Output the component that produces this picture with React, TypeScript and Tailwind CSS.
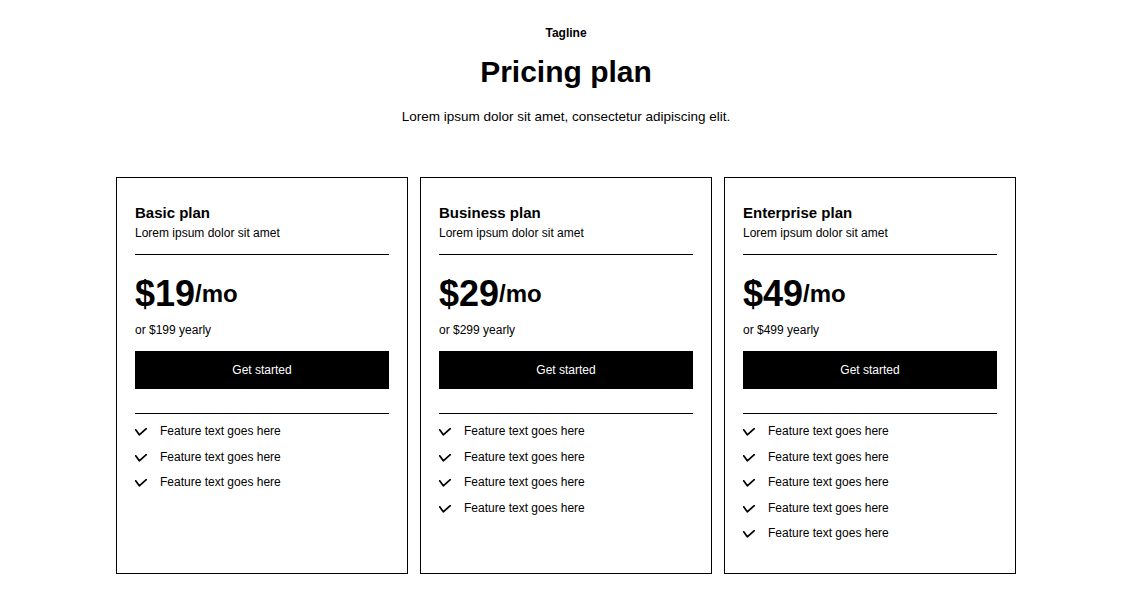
const plans = [
  { name: "Basic plan", price: "$19", yearly: "or $199 yearly", features: 3 },
  { name: "Business plan", price: "$29", yearly: "or $299 yearly", features: 4 },
  { name: "Enterprise plan", price: "$49", yearly: "or $499 yearly", features: 5 },
];

function CheckIcon() {
  return (
    <svg width="12" height="8" viewBox="0 0 12 8" fill="none" className="mt-[5px] shrink-0">
      <polyline
        points="0.7,1.8 4.3,6.8 11.3,0.6"
        stroke="#000"
        strokeWidth="1.7"
        strokeLinecap="round"
        strokeLinejoin="round"
      />
    </svg>
  );
}

function PlanCard({ name, price, yearly, features }: (typeof plans)[number]) {
  return (
    <div className="flex flex-col border border-black bg-white px-[18px] pt-[25px] pb-[32px]">
      <h3 className="text-[15px] font-bold leading-[20px]">{name}</h3>
      <p className="mt-[2px] text-[12px] leading-[16px]">Lorem ipsum dolor sit amet</p>
      <div className="mt-[13px] h-px bg-black" />
      <div className="mt-[19.5px] flex items-center font-bold leading-[40px]">
        <span className="text-[36px]">{price}</span>
        <span className="text-[24px]">/mo</span>
      </div>
      <p className="mt-[7.5px] text-[12px] leading-[16px]">{yearly}</p>
      <button
        type="button"
        className="mt-[13px] h-[38px] w-full bg-black text-[12px] font-medium text-white"
      >
        Get started
      </button>
      <div className="mt-[24px] h-px bg-black" />
      <ul className="mt-[9.5px] flex flex-col gap-[9.5px]">
        {Array.from({ length: features }).map((_, i) => (
          <li key={i} className="flex items-start gap-[13px] text-[12px] leading-[16px]">
            <CheckIcon />
            <span>Feature text goes here</span>
          </li>
        ))}
      </ul>
    </div>
  );
}

export default function App() {
  return (
    <div className="min-h-[603px] w-[1132px] bg-white text-black font-['Liberation_Sans',Arial,sans-serif]">
      <div className="flex flex-col items-center pt-[24px] text-center">
        <p className="text-[12px] font-bold leading-[18px]">Tagline</p>
        <h1 className="mt-[11.6px] text-[30px] font-bold leading-[36px]">Pricing plan</h1>
        <p className="mt-[17.3px] text-[13.5px] leading-[20px]">
          Lorem ipsum dolor sit amet, consectetur adipiscing elit.
        </p>
      </div>
      <div className="mx-auto mt-[50px] grid w-[900px] grid-cols-3 gap-[12px]">
        {plans.map((p) => (
          <PlanCard key={p.name} {...p} />
        ))}
      </div>
    </div>
  );
}
